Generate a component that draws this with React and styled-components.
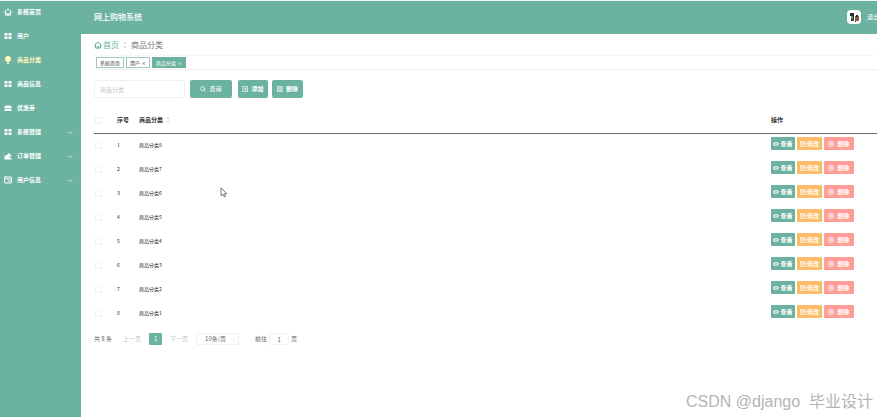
import React, { useState } from 'react';
import styled, { createGlobalStyle } from 'styled-components';

const GREEN = "#6bb3a0";

const menu = [
    { title: "系统首页", icon: "home" },
    { title: "用户", icon: "grid" },
    { title: "商品分类", icon: "bulb", active: true },
    { title: "商品信息", icon: "grid" },
    { title: "优惠券", icon: "case" },
    { title: "系统管理", icon: "grid", nested: true },
    { title: "订单管理", icon: "wallet", nested: true },
    { title: "用户信息", icon: "card", nested: true },
];

const rows = [8, 7, 6, 5, 4, 3, 2, 1].map((n) => `商品分类${n}`);

const line = { fill: "none", stroke: "currentColor", strokeWidth: 2, strokeLinejoin: "round", strokeLinecap: "round" };

const shapes = {
    home: <g { ...line }><path d="M1 8 8 2l7 6" /><path d="M3 7v7h10V7" /><path d="M6.5 14v-3h3v3" /></g>,
    grid: <path fill="currentColor" d="M1 2h6v5H1zM9 2h6v5H9zM1 9h6v5H1zM9 9h6v5H9z" />,
    bulb: <path fill="currentColor" d="M8 0a6 6 0 0 0-6 6c0 3 2 4 3 6h6c1-2 3-3 3-6a6 6 0 0 0-6-6zM6 13h4v3H6z" />,
    case: <path fill="currentColor" d="M5 2h6v2h4v4H1V4h4zm1.500 1.200V4h3v-.8zM1 9.500h14V14H1z" />,
    wallet: <path fill="currentColor" d="M1 7h4l4-5 4 3v2h2v2h-4v3h4v3H1z" />,
    card: <g { ...line }><rect x="1" y="2" width="14" height="12" rx="1" /><path d="M1 6h14M9 10h6" /></g>,
    search: <g { ...line }><circle cx="7" cy="7" r="5.500" /><path d="m11 12 3 3" /></g>,
    plus: <g { ...line }><rect x="1" y="1" width="14" height="14" /><path d="M8 4.500v7M4.500 8h7" /></g>,
    list: <g { ...line }><rect x="2" y="1" width="12" height="14" /><path d="M5 5h6M5 8h6M5 11h6" /></g>,
    eye: <path fill="currentColor" fillRule="evenodd" d="M0 8c4-7 12-7 16 0-4 7-12 7-16 0zm8-3.500a3.500 3.500 0 1 0 0 7 3.500 3.500 0 0 0 0-7zm0 2a1.500 1.500 0 1 1 0 3 1.500 1.500 0 0 1 0-3z" />,
    edit: <g { ...line }><path d="M10 2H1v13h13V7" /><path d="m5 11 1-3 7-7 2 2-7 7zM4 5h3" /></g>,
    remove: <g { ...line }><circle cx="8" cy="8" r="7" /><path d="m5.500 5.500 5 5m0-5-5 5" /></g>,
    down: <path { ...line } d="m3 6 5 5 5-5" />,
    sort: <path fill="currentColor" d="m8 0 4 5H4zM8 16l4-5H4z" />,
};

const Icon = ({ name, size = 6 }) => (
    <IconSvg viewBox="0 0 16 16" width={ size } height={ size } aria-hidden="true">{ shapes[name] }</IconSvg>
);

const App = () => {
    const [keyword, setkeyword] = useState("");
    const [page, setpage] = useState("1");

    return (
        <>
            <GlobalStyle />
            <Layout>
                <Sidebar>
                    { menu.map((item) => (
                        <MenuItem href="#" key={ item.title } $active={ item.active }>
                            <Icon name={ item.icon } size={ 8 } />
                            <span>{ item.title }</span>
                            { item.nested && <Icon name="down" size={ 5 } /> }
                        </MenuItem>
                    )) }
                </Sidebar>
                <Main>
                    <Header>
                        <h1>网上购物系统</h1>
                        <UserArea>
                            <Avatar viewBox="0 0 14 14" role="img" aria-label="头像">
                                <rect width="14" height="14" rx="4" fill="#fff" />
                                <path fill="#28332d" d="M3 3h4v3H3zM4 6h3v5H4z" />
                                <path fill="#4e9a62" d="M4 6h2v3H4z" />
                                <path fill="#37466f" d="M5 9h2v2H5z" />
                                <path fill="#8b5a43" d="M8 6h4v5H8z" />
                                <path fill="#33231e" d="M9 5h2v2H9zM8 11h1v1H8z" />
                            </Avatar>
                            <Logout type="button">退出</Logout>
                        </UserArea>
                    </Header>
                    <Content>
                        <Breadcrumb aria-label="breadcrumb">
                            <a href="#"><Icon name="home" size={ 8 } />首页</a>
                            <Separator><Icon name="sort" size={ 6 } /></Separator>
                            <span>商品分类</span>
                        </Breadcrumb>
                        <Tabs>
                            <Tab type="button">系统首页</Tab>
                            <Tab type="button">用户<i>×</i></Tab>
                            <Tab type="button" $active>商品分类<i>×</i></Tab>
                        </Tabs>
                        <SearchBar>
                            <SearchInput
                                aria-label="商品分类"
                                placeholder="商品分类"
                                value={ keyword }
                                onChange={ (e) => setkeyword(e.target.value) }
                            />
                            <ToolBtn type="button" $width={ 42 }><Icon name="search" />查询</ToolBtn>
                            <BtnGroup>
                                <ToolBtn type="button" $width={ 30 } $strong><Icon name="plus" />添加</ToolBtn>
                                <ToolBtn type="button" $width={ 31 } $strong><Icon name="list" />删除</ToolBtn>
                            </BtnGroup>
                        </SearchBar>
                        <Table>
                            <colgroup>
                                <col width="23" />
                                <col width="22" />
                                <col />
                                <col width="106" />
                            </colgroup>
                            <thead>
                                <tr>
                                    <th><Check type="checkbox" aria-label="全选" /></th>
                                    <th>序号</th>
                                    <th><SortLabel>商品分类<Icon name="sort" size={ 6 } /></SortLabel></th>
                                    <th>操作</th>
                                </tr>
                            </thead>
                            <tbody>
                                { rows.map((name, index) => (
                                    <tr key={ name }>
                                        <td><Check type="checkbox" aria-label={ name } /></td>
                                        <td>{ index + 1 }</td>
                                        <td>{ name }</td>
                                        <td>
                                            <Actions>
                                                <RowBtn type="button" $bgc={ GREEN } $width={ 24 }><Icon name="eye" />查看</RowBtn>
                                                <RowBtn type="button" $bgc="#ffbc68" $width={ 25 }><Icon name="edit" />修改</RowBtn>
                                                <RowBtn type="button" $bgc="#ff9d96" $width={ 30 } $gap={ 3 }><Icon name="remove" />删除</RowBtn>
                                            </Actions>
                                        </td>
                                    </tr>
                                )) }
                            </tbody>
                        </Table>
                        <Pagination>
                            <Total>共 8 条</Total>
                            <PageBtn type="button" disabled>上一页</PageBtn>
                            <PageBtn type="button" $current>1</PageBtn>
                            <PageBtn type="button" disabled>下一页</PageBtn>
                            <SizeSelect>
                                <select aria-label="每页条数" defaultValue="10">
                                    <option value="10">10条/页</option>
                                    <option value="20">20条/页</option>
                                </select>
                                <Icon name="down" size={ 4 } />
                            </SizeSelect>
                            <Jump>
                                前往
                                <input value={ page } onChange={ (e) => setpage(e.target.value) } />
                                页
                            </Jump>
                        </Pagination>
                    </Content>
                </Main>
                <Pointer viewBox="0 0 8 11" aria-hidden="true">
                    <path d="M1 .8v8l2-1.600 1.300 2.800 1.200-.5-1.200-2.800h2.500z" fill="#fff" stroke="#555" strokeWidth=".8" />
                </Pointer>
                <Watermark>{ "CSDN @django  毕业设计" }</Watermark>
            </Layout>
        </>
    );
};

export default App;

const GlobalStyle = createGlobalStyle`
    * { box-sizing: border-box; }
    body {
        margin: 0;
        background: white;
        color: #333;
        font: 6px/8px "Noto Sans CJK SC", sans-serif;
    }
    button, input, select {
        font: inherit;
        color: inherit;
        padding: 0;
        margin: 0;
        border: 0;
        background: none;
    }
    a { color: inherit; text-decoration: none; }
`;

const IconSvg = styled.svg`
    display: block;
    flex: none;
`;

const Layout = styled.div`
    position: relative;
    display: flex;
    min-height: 100vh;
    border-top: 1px solid #f4faf8;
    overflow: hidden;
`;

const Sidebar = styled.nav`
    flex: 0 0 81px;
    background: ${GREEN};
`;

const MenuItem = styled.a`
    display: flex;
    align-items: center;
    gap: 5px;
    height: 24px;
    padding: 0 8px 2px 4px;
    color: ${(p) => (p.$active ? "#fdf7bd" : "white")};
    font-weight: 700;
    span { flex: 1; }
`;

const Main = styled.main`
    flex: 1;
    min-width: 0;
`;

const Header = styled.header`
    display: flex;
    align-items: center;
    justify-content: space-between;
    height: 33px;
    padding: 0 0 1px 13px;
    background: ${GREEN};
    color: white;
    h1 {
        margin: 0;
        font-size: 8px;
        font-weight: 500;
    }
`;

const UserArea = styled.div`
    display: flex;
    align-items: center;
    gap: 6px;
    width: 30px;
    overflow: hidden;
`;

const Avatar = styled.svg`
    flex: none;
    width: 14px;
    height: 14px;
`;

const Logout = styled.button`
    flex: none;
    white-space: nowrap;
`;

const Content = styled.div`
    padding-left: 13px;
`;

const Breadcrumb = styled.nav`
    display: flex;
    align-items: center;
    gap: 3px;
    height: 22px;
    border-bottom: 1px solid #f7f7f7;
    color: #777;
    font-size: 8px;
    a {
        display: flex;
        align-items: center;
        gap: 1px;
        color: ${GREEN};
    }
`;

const Separator = styled.span`
    color: #ccc;
`;

const Tabs = styled.div`
    display: flex;
    align-items: center;
    gap: 2px;
    height: 14px;
    padding-left: 2px;
    border-bottom: 1px solid #eee;
`;

const Tab = styled.button`
    display: flex;
    align-items: center;
    gap: 1px;
    height: 11px;
    padding: 0 3px;
    border: 1px solid ${(p) => (p.$active ? GREEN : "#9fc9be")};
    background: ${(p) => (p.$active ? GREEN : "white")};
    color: ${(p) => (p.$active ? "white" : "#333")};
    font-size: 5px;
    i { font-style: normal; }
`;

const SearchBar = styled.div`
    display: flex;
    align-items: center;
    gap: 5px;
    padding: 10px 0;
`;

const SearchInput = styled.input`
    width: 91px;
    height: 18px;
    padding: 0 5px;
    border: 1px solid #f0f0f0;
    border-radius: 2px;
    &::placeholder { color: #c4c7cc; }
`;

const BtnGroup = styled.div`
    display: flex;
    gap: 4px;
    padding-left: 1px;
`;

const ToolBtn = styled.button`
    display: flex;
    align-items: center;
    justify-content: center;
    gap: 3px;
    width: ${(p) => p.$width}px;
    height: 18px;
    border-radius: 2px;
    background: ${GREEN};
    color: white;
    font-weight: ${(p) => (p.$strong ? 700 : 500)};
`;

const Table = styled.table`
    width: 100%;
    table-layout: fixed;
    border-collapse: collapse;
    text-align: left;
    th, td { padding: 0; }
    th {
        height: 25px;
        border-bottom: 1px solid #666;
        font-weight: 700;
    }
    td {
        height: 24px;
        color: #222;
        font-size: 5px;
    }
`;

const SortLabel = styled.span`
    display: flex;
    align-items: center;
    gap: 2px;
    svg { color: #ccc; }
`;

const Check = styled.input`
    display: block;
    appearance: none;
    width: 7px;
    height: 7px;
    margin-left: 1px;
    border: 1px solid #f0f0f0;
    border-radius: 1px;
    &:checked { background: ${GREEN}; }
`;

const Actions = styled.div`
    display: flex;
    gap: 2px;
    padding-bottom: 3px;
`;

const RowBtn = styled.button`
    display: flex;
    align-items: center;
    justify-content: center;
    gap: ${(p) => p.$gap || 1}px;
    width: ${(p) => p.$width}px;
    height: 13px;
    border-radius: 1px;
    background: ${(p) => p.$bgc};
    color: white;
    font-size: 6px;
    font-weight: 700;
`;

const Pagination = styled.div`
    display: flex;
    align-items: center;
    gap: 8px;
    padding-top: 8px;
    color: #666;
`;

const Total = styled.span`
    padding-right: 3px;
`;

const PageBtn = styled.button`
    min-width: 13px;
    height: 12px;
    border-radius: 1px;
    background: ${(p) => (p.$current ? GREEN : "transparent")};
    color: ${(p) => (p.$current ? "white" : "#c0c4cc")};
`;

const SizeSelect = styled.label`
    display: flex;
    align-items: center;
    width: 43px;
    height: 12px;
    padding: 0 3px 0 8px;
    border: 1px solid #f0f0f0;
    border-radius: 2px;
    svg { color: #ccc; }
    select {
        flex: 1;
        min-width: 0;
        appearance: none;
    }
`;

const Jump = styled.label`
    display: flex;
    align-items: center;
    gap: 2px;
    padding-left: 8px;
    input {
        width: 20px;
        height: 12px;
        border: 1px solid #f0f0f0;
        border-radius: 2px;
        text-align: center;
    }
`;

const Pointer = styled.svg`
    position: absolute;
    left: 220px;
    top: 186px;
    width: 8px;
    height: 11px;
`;

const Watermark = styled.div`
    position: absolute;
    right: 4px;
    bottom: 3px;
    color: #b4b4b4;
    font-family: "Liberation Sans", "Noto Sans CJK SC", sans-serif;
    font-size: 16px;
    line-height: 24px;
    white-space: pre;
`;
